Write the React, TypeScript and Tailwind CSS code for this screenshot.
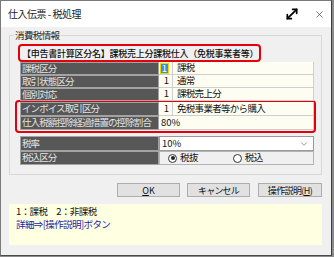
import { MoveDiagonal, X, ChevronDown } from "lucide-react"

const rowsTop = [
  { label: "課税区分", num: "1", text: "課税", focus: true },
  { label: "取引状態区分", num: "1", text: "通常" },
  { label: "個別対応", num: "1", text: "課税売上分" },
]

function Label({ children }: { children: React.ReactNode }) {
  return (
    <div className="h-full flex items-center pl-[1px] bg-[#575757] border border-[#a3a3a3] text-[#e4e4e4] tracking-[-0.9px] whitespace-nowrap overflow-hidden">
      {children}
    </div>
  )
}

function Row({
  label,
  num,
  text,
  focus,
  h = "h-[13px]",
}: {
  label: string
  num: string
  text: string
  focus?: boolean
  h?: string
}) {
  return (
    <div className={`grid grid-cols-[139px_14px_1fr] ${h}`}>
      <Label>{label}</Label>
      <div className="flex items-center justify-end pr-[3px] bg-[#fdfdf1] border-b border-r border-[#cfcfcf]">
        {focus ? (
          <span className="border border-[#f2d600] bg-[#3b8fe0] text-white px-[1px] leading-[9px]">
            {num}
          </span>
        ) : (
          num
        )}
      </div>
      <div className="flex items-center pl-[4px] bg-[#fdfdf1] border-b border-r border-[#cfcfcf] tracking-[-0.7px]">
        {text}
      </div>
    </div>
  )
}

function Radio({ on }: { on?: boolean }) {
  return (
    <span className="w-[9px] h-[9px] rounded-full border border-[#333] bg-white flex items-center justify-center">
      {on && <span className="w-[4px] h-[4px] rounded-full bg-[#222]" />}
    </span>
  )
}

export default function App() {
  return (
    <div className="w-[334px] h-[257px] bg-[#8c8c8c] overflow-hidden font-['Noto_Sans_CJK_JP','Noto_Sans',sans-serif] text-[9.5px] leading-none text-[#111]">
      <div className="w-[332px] h-[256px] bg-[#f0f0f0] border border-[#7a7a7a] border-r-[#3d3d3d] border-b-[#4a4a4a] flex flex-col">
        {/* Title bar */}
        <div className="h-[26px] bg-white flex items-center justify-between pl-[7px] pr-[6px]">
          <span className="text-[10px] tracking-[-0.5px] text-[#222]">仕入伝票 - 税処理</span>
          <div className="flex items-center gap-[14px]">
            <MoveDiagonal className="w-[16px] h-[16px] text-black" strokeWidth={2.6} />
            <X className="w-[11px] h-[11px] text-[#333]" strokeWidth={1.4} />
          </div>
        </div>

        {/* Body */}
        <div className="flex-1 flex flex-col pl-[8px] pr-[9px] pt-[2px]">
          <fieldset className="border border-[#d8d8d8] px-0 pb-[9px]">
            <legend className="ml-[4px] px-[1px] leading-[12px] tracking-[-0.6px] text-[#222]">消費税情報</legend>

            <div className="mt-[3px] ml-[8px] w-[243px] h-[18px] border-2 border-[#e3000b] rounded-[4px] flex items-center pl-[2px] font-medium text-[9px] tracking-[-0.25px] whitespace-nowrap overflow-hidden">
              【申告書計算区分名】課税売上分課税仕入（免税事業者等）
            </div>

            <div className="ml-[10px] w-[294px]">
              {rowsTop.map((r) => (
                <Row key={r.label} {...r} />
              ))}
            </div>

            <div className="-mt-[1px] ml-[5px] w-[301px] border-2 border-[#e3000b] rounded-[4px] pl-[3px] pb-[1px]">
              <Row label="インボイス取引区分" num="1" text="免税事業者等から購入" h="h-[14px]" />
              <div className="grid grid-cols-[139px_1fr] h-[14px]">
                <Label>仕入税額控除経過措置の控除割合</Label>
                <div className="flex items-center pl-[2px] bg-[#fdfdf1] border-b border-r border-[#cfcfcf]">80%</div>
              </div>
            </div>

            <div className="mt-[3px] ml-[10px] w-[294px]">
              <div className="grid grid-cols-[139px_1fr] h-[15px]">
                <Label>税率</Label>
                <div className="flex items-center justify-between pl-[2px] pr-[4px] bg-white border border-[#9a9a9a]">
                  <span>10%</span>
                  <ChevronDown className="w-[10px] h-[10px] text-[#555]" strokeWidth={1.5} />
                </div>
              </div>
              <div className="grid grid-cols-[139px_1fr] h-[14px]">
                <Label>税込区分</Label>
                <div className="flex items-center pl-[8px] bg-[#f0f0f0] border border-[#b4b4b4]">
                  <Radio on />
                  <span className="ml-[3px] tracking-[-0.6px]">税抜</span>
                  <span className="ml-[35px]" />
                  <Radio />
                  <span className="ml-[3px] tracking-[-0.6px]">税込</span>
                </div>
              </div>
            </div>
          </fieldset>

          {/* Buttons */}
          <div className="mt-[8px] flex justify-end gap-[7px] text-[9px]">
            <button className="w-[63px] h-[14px] bg-[#e1e1e1] border border-[#adadad] flex items-center justify-center leading-none">
              <span className="underline">O</span>K
            </button>
            <button className="w-[63px] h-[14px] bg-[#e1e1e1] border border-[#adadad] flex items-center justify-center leading-none tracking-[-0.8px]">
              キャンセル
            </button>
            <button className="ml-[1px] w-[64px] h-[14px] bg-[#e1e1e1] border border-[#adadad] flex items-center justify-center leading-none tracking-[-0.6px]">
              操作説明(<span className="underline">H</span>)
            </button>
          </div>

          {/* Help */}
          <div className="mt-[7px] h-[41px] bg-[#ffffe1] pl-[7px] pt-[1px] leading-[13px] tracking-[-0.6px]">
            <div>1：課税　2：非課税</div>
            <div className="text-[#1c1ca8]">詳細⇒[操作説明]ボタン</div>
          </div>
        </div>
      </div>
    </div>
  )
}
